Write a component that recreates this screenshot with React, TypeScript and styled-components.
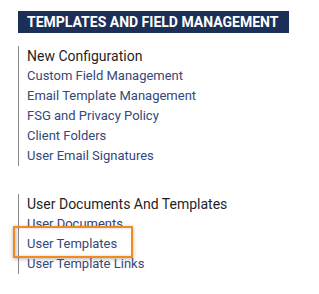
import styled, {createGlobalStyle} from 'styled-components'

const GlobalStyle = createGlobalStyle`
  body {
    margin: 0;
    background: #ffffff;
    font-family: Roboto, "Liberation Sans", sans-serif;
  }
`

const groups = [
  {
    title: 'New Configuration',
    links: [
      'Custom Field Management',
      'Email Template Management',
      'FSG and Privacy Policy',
      'Client Folders',
      'User Email Signatures',
    ],
  },
  {
    title: 'User Documents And Templates',
    links: ['User Documents', 'User Templates', 'User Template Links'],
  },
]

const HIGHLIGHTED = 'User Templates'

export default function App() {
  return (
    <>
      <GlobalStyle />
      <Page>
        <Heading>TEMPLATES AND FIELD MANAGEMENT</Heading>
        <Groups>
          {groups.map((group) => (
            <Group key={group.title}>
              <GroupTitle>{group.title}</GroupTitle>
              {group.links.map((link) => (
                <LinkRow key={link}>
                  <NavLink href="#">{link}</NavLink>
                  {link === HIGHLIGHTED && <Highlight />}
                </LinkRow>
              ))}
            </Group>
          ))}
        </Groups>
      </Page>
    </>
  )
}

const Page = styled.div`
  padding: 11px 0 0 18px;
`

const Heading = styled.h2`
  margin: 0;
  width: 271px;
  height: 22px;
  box-sizing: border-box;
  padding: 0 9px;
  background: #1b2f57;
  color: #ffffff;
  font-size: 14px;
  font-weight: 700;
  line-height: 22px;
  white-space: nowrap;
`

const Groups = styled.div`
  display: flex;
  flex-direction: column;
  gap: 28px;
  margin-top: 13px;
`

const Group = styled.div`
  border-left: 1px solid #8a8a8a;
  padding-left: 8px;
  display: flex;
  flex-direction: column;
`

const GroupTitle = styled.div`
  font-size: 14px;
  line-height: 20px;
  color: #1f1f1f;
`

const LinkRow = styled.div`
  position: relative;
  font-size: 13px;
  line-height: 20px;
`

const NavLink = styled.a`
  color: #34487a;
  text-decoration: none;
`

const Highlight = styled.div`
  position: absolute;
  left: -14px;
  top: -8px;
  width: 120px;
  height: 32px;
  box-sizing: border-box;
  border: 2px solid #f28a1e;
  box-shadow: 0 1px 4px rgba(0, 0, 0, 0.3), inset 2px 0 3px rgba(0, 0, 0, 0.2);
  pointer-events: none;
`
